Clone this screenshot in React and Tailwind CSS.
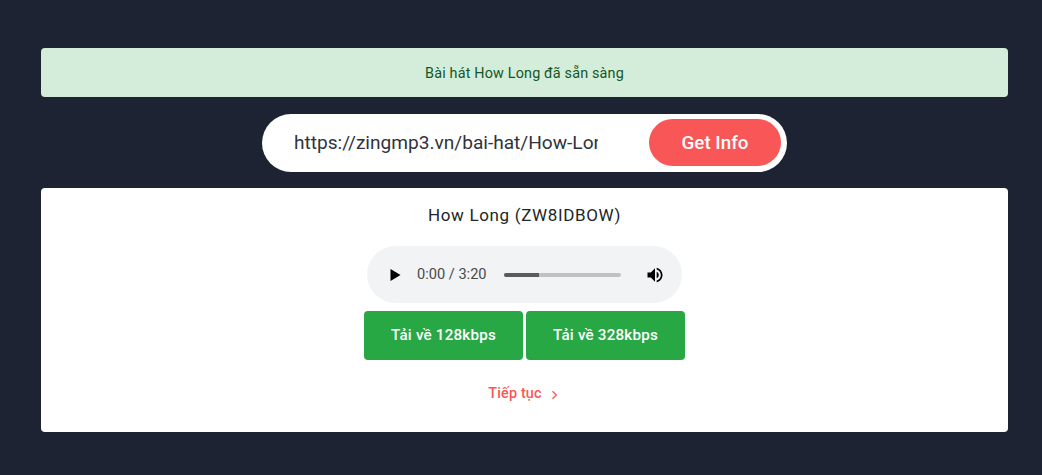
import React from "react";

export default function App() {
  return (
    <div className="min-h-[475px] bg-[#1e2334] px-[41px] pt-[48px] pr-[34px] font-['Roboto',sans-serif]">
      <div className="flex h-[49px] items-center justify-center rounded-[4px] bg-[#d4edda] pt-[2px] text-[14.4px] tracking-[0.16px] text-[#155724]">
        Bài hát How Long đã sẵn sàng
      </div>
      <div className="mt-[17px] flex justify-center">
        <div className="flex h-[58px] w-[525px] items-center rounded-full bg-white pl-[32px] pr-[6px]">
          <input
            readOnly
            value="https://zingmp3.vn/bai-hat/How-Long-Charlie-Puth/ZW8IDBOW.html"
            className="w-[304px] bg-transparent text-[19.1px] text-[#2f333c] outline-none font-['Roboto',sans-serif]"
          />
          <button className="mb-[2px] ml-auto h-[47px] w-[132px] rounded-full bg-[#f95757] pt-[2px] text-[18.8px] font-medium text-white">
            Get Info
          </button>
        </div>
      </div>
      <div className="mt-[16px] flex h-[244px] flex-col items-center rounded-[4px] bg-white pt-[17px]">
        <div className="text-[17px] font-normal leading-[20px] tracking-[0.65px] text-[#212529]">How Long (ZW8IDBOW)</div>
        <div className="mt-[21px] flex h-[57px] w-[315px] items-center rounded-full bg-[#f1f3f4] pl-[23px] pr-[17px]">
          <svg width="11" height="12" viewBox="0 0 10 12" className="shrink-0"><path d="M0 0 L10 6 L0 12 Z" fill="#000" /></svg>
          <span className="ml-[16px] text-[14.6px] text-[#4a4a4a]">0:00 / 3:20</span>
          <div className="ml-[17px] h-[4px] w-[117px] overflow-hidden rounded-full bg-[#c0c1c2]">
            <div className="h-full w-[35px] bg-[#5b5b5b]" />
          </div>
          <svg width="20" height="20" viewBox="0 0 24 24" className="ml-auto shrink-0">
            <path d="M3 9v6h4l5 5V4L7 9H3z" fill="#000" />
            <path d="M14 3.2v2.1c2.9.9 5 3.5 5 6.7s-2.1 5.8-5 6.7v2.1c4-.9 7-4.5 7-8.8s-3-7.9-7-8.8z" fill="#000" />
            <path d="M16.5 12c0-1.8-1-3.3-2.5-4v8c1.5-.7 2.5-2.2 2.5-4z" fill="#000" />
          </svg>
        </div>
        <div className="mt-[8px] flex gap-[3px]">
          <button className="h-[49px] w-[159px] rounded-[4px] bg-[#28a745] text-[15.2px] font-medium tracking-[0.2px] text-white">Tải về 128kbps</button>
          <button className="h-[49px] w-[159px] rounded-[4px] bg-[#28a745] text-[15.2px] font-medium tracking-[0.2px] text-white">Tải về 328kbps</button>
        </div>
        <div className="mt-[24px] flex items-center gap-[9px] pr-[3px] text-[14.4px] font-medium leading-[20px] tracking-[0.15px] text-[#f95757]">
          <span>Tiếp tục</span>
          <svg width="7" height="10" viewBox="0 0 7 10" fill="none" className="mt-[1px]"><path d="M1.5 1.2 L5.3 5 L1.5 8.8" stroke="#f95757" strokeWidth="1.3" /></svg>
        </div>
      </div>
    </div>
  );
}
